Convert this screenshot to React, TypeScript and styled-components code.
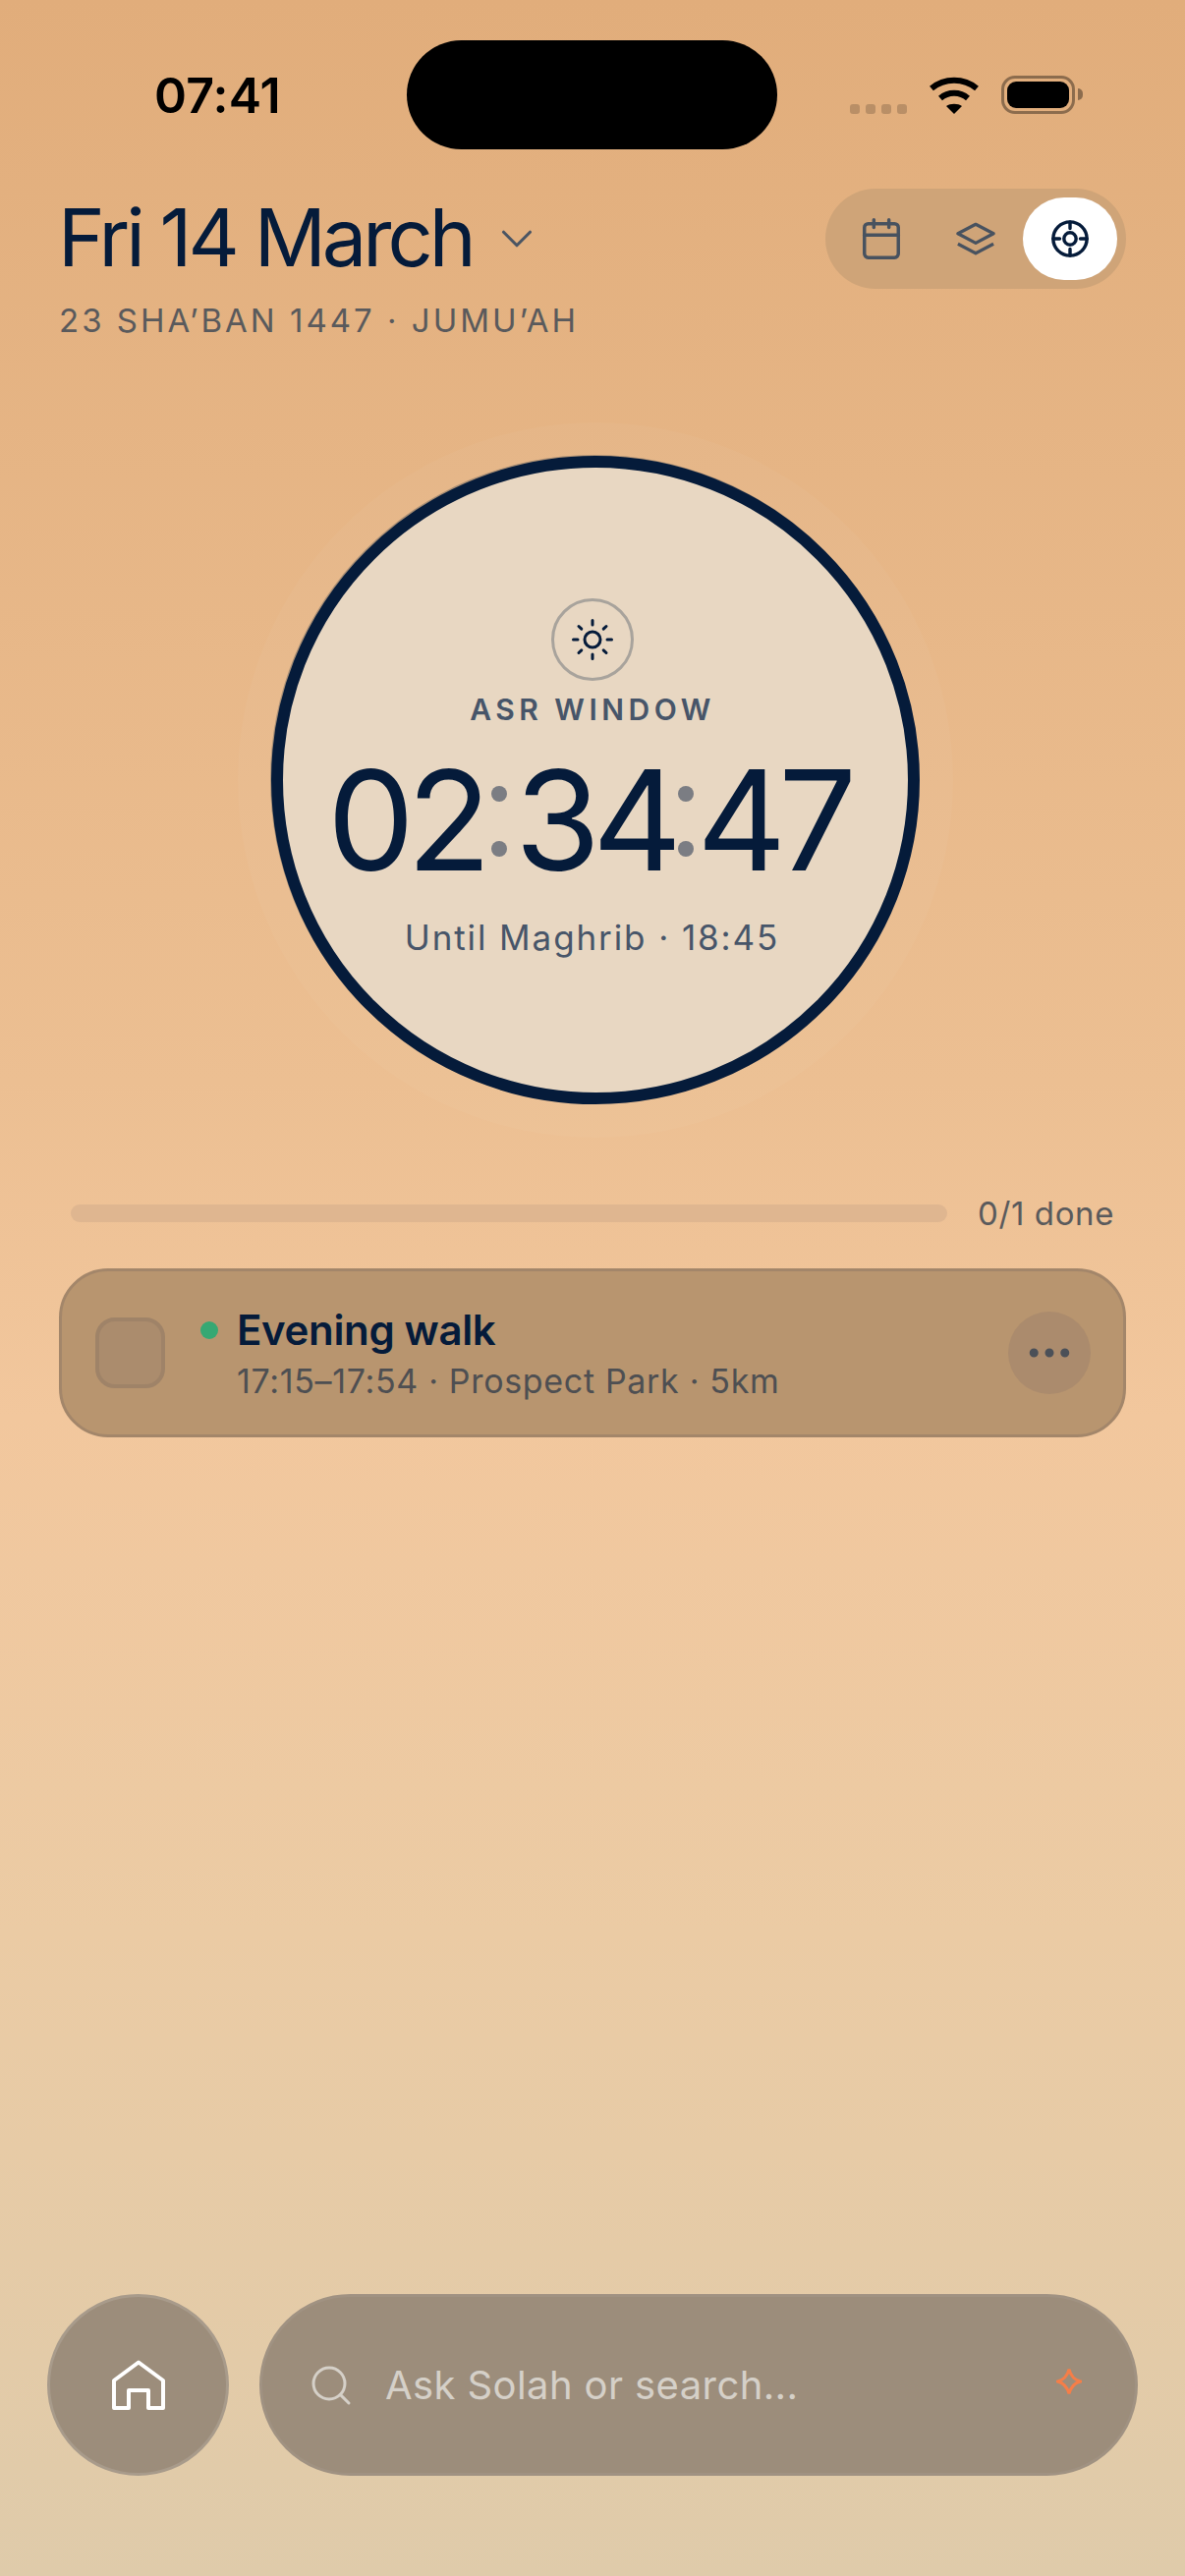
import React from "react";
import styled, { createGlobalStyle } from "styled-components";
import { ChevronDown, Ellipsis, Search, Calendar } from "lucide-react";

const GlobalStyle = createGlobalStyle`
  html, body {
    margin: 0;
    padding: 0;
  }
  body {
    font-family: "Inter", "Liberation Sans", sans-serif;
  }
  * {
    box-sizing: border-box;
  }
`;

const Screen = styled.div`
  width: 1206px;
  height: 2622px;
  display: flex;
  flex-direction: column;
  overflow: hidden;
  background: linear-gradient(180deg, #e1ad7b 0%, #ecbf92 42%, #f2c79d 55%, #ebcba4 75%, #dfcbaa 100%);
`;

const StatusBar = styled.div`
  display: grid;
  grid-template-columns: 414px 377px 1fr;
  align-items: center;
  height: 152px;
  padding-top: 41px;
`;

const Clock = styled.span`
  margin-left: 157px;
  font-size: 50px;
  font-weight: 600;
  letter-spacing: 0.2px;
  color: #000;
`;

const Island = styled.div`
  height: 111px;
  border-radius: 56px;
  background: #000;
`;

const StatusIcons = styled.div`
  display: flex;
  align-items: center;
  padding-left: 74px;
`;

const SignalDots = styled.div`
  display: flex;
  gap: 6px;
  margin: 28px 22px 0 0;
`;

const SignalDot = styled.span`
  width: 10px;
  height: 10px;
  border-radius: 3px;
  background: rgba(0, 0, 0, 0.18);
`;

const Battery = styled.div`
  width: 75px;
  height: 39px;
  margin-left: 22px;
  padding: 3px;
  position: relative;
  border: 3px solid rgba(0, 0, 0, 0.38);
  border-radius: 14px;
  &::after {
    content: "";
    position: absolute;
    right: -11px;
    top: 10px;
    width: 5px;
    height: 12px;
    border-radius: 0 6px 6px 0;
    background: rgba(0, 0, 0, 0.38);
  }
`;

const BatteryFill = styled.div`
  height: 100%;
  border-radius: 9px;
  background: #000;
`;

const Header = styled.header`
  display: flex;
  justify-content: space-between;
  align-items: flex-start;
  margin-top: 40px;
  padding: 0 60px;
`;

const DateBlock = styled.div`
  padding-top: 10px;
`;

const DateRow = styled.div`
  display: flex;
  align-items: center;
  color: #4b5563;
  svg {
    margin-left: 18px;
  }
`;

const DateTitle = styled.h1`
  margin: 0 0 0 -1px;
  font-size: 81px;
  line-height: 81px;
  font-weight: 400;
  letter-spacing: -4px;
  color: #051b3a;
`;

const HijriDate = styled.div`
  margin-top: 23px;
  font-size: 33px;
  line-height: 40px;
  letter-spacing: 3px;
  color: #5a5a5c;
`;

const ViewSwitch = styled.div`
  display: flex;
  padding: 9px;
  border-radius: 51px;
  background: #cfa478;
`;

const ViewButton = styled.div<{ $active?: boolean }>`
  width: 96px;
  height: 84px;
  display: flex;
  align-items: center;
  justify-content: center;
  border-radius: 42px;
  color: ${(p) => (p.$active ? "#051b3a" : "#48525f")};
  background: ${(p) => (p.$active ? "#fff" : "transparent")};
`;

const ClockSection = styled.section`
  display: flex;
  justify-content: center;
  margin: 118px 0 0 5px;
`;

const Dial = styled.div`
  width: 660px;
  height: 660px;
  padding-top: 133px;
  display: flex;
  flex-direction: column;
  align-items: center;
  border: 12px solid #051b3a;
  border-radius: 50%;
  background: #e8d7c2;
  box-shadow: -1px -1px 0 rgba(90, 90, 90, 0.45), 0 0 0 34px rgba(255, 255, 255, 0.035);
`;

const SunBadge = styled.div`
  width: 84px;
  height: 84px;
  margin-left: -5px;
  display: flex;
  align-items: center;
  justify-content: center;
  border: 3px solid #a8a39c;
  border-radius: 50%;
  color: #051b3a;
`;

const WindowLabel = styled.div`
  margin: 11px 0 0 -5px;
  font-size: 30px;
  line-height: 36px;
  font-weight: 600;
  letter-spacing: 4.5px;
  color: #475569;
`;

const Countdown = styled.div`
  display: flex;
  margin: 24px 0 0 -14px;
  font-size: 141px;
  line-height: 142px;
  font-weight: 400;
  letter-spacing: -8px;
  color: #051b3a;
`;

const Colon = styled.span<{ $width: number }>`
  width: ${(p) => p.$width}px;
  height: 72px;
  margin-top: 36px;
  display: flex;
  flex-direction: column;
  justify-content: space-between;
  align-items: center;
  &::before,
  &::after {
    content: "";
    flex: none;
    width: 16px;
    height: 16px;
    border-radius: 50%;
    background: #7b7d83;
  }
`;

const UntilLabel = styled.div`
  margin: 28px 0 0 -6px;
  font-size: 35px;
  line-height: 40px;
  letter-spacing: 1.9px;
  color: #475569;
`;

const Progress = styled.div`
  display: flex;
  align-items: center;
  gap: 31px;
  height: 40px;
  margin: 91px 72px 0 72px;
`;

const ProgressTrack = styled.div`
  flex: 1;
  height: 18px;
  border-radius: 9px;
  background: #dfb690;
`;

const ProgressText = styled.span`
  font-size: 33px;
  letter-spacing: 0.6px;
  color: #5a5a5c;
`;

const TaskCard = styled.div`
  display: flex;
  align-items: center;
  height: 172px;
  margin: 36px 60px 0;
  padding: 0 33px 0 34px;
  border: 3px solid #a3866a;
  border-radius: 50px;
  background: #b8956f;
`;

const Checkbox = styled.div`
  width: 71px;
  height: 72px;
  border: 4px solid #9f8368;
  border-radius: 20px;
  background: #ab8c6d;
`;

const TaskBody = styled.div`
  flex: 1;
  margin-left: 36px;
`;

const TaskTitleRow = styled.div`
  display: flex;
  align-items: center;
  gap: 19px;
`;

const StatusDot = styled.span`
  width: 18px;
  height: 18px;
  border-radius: 50%;
  background: #36a873;
`;

const TaskTitle = styled.div`
  font-size: 42px;
  line-height: 50px;
  font-weight: 600;
  letter-spacing: -0.35px;
  color: #051b3a;
`;

const TaskMeta = styled.div`
  margin: 7px 0 0 37px;
  font-size: 34px;
  line-height: 40px;
  letter-spacing: 0.67px;
  color: #4e4f52;
`;

const MoreButton = styled.div`
  width: 84px;
  height: 84px;
  display: flex;
  align-items: center;
  justify-content: center;
  border-radius: 50%;
  color: #4b5058;
  background: #ab8b6d;
`;

const BottomBar = styled.div`
  display: flex;
  gap: 31px;
  margin-top: auto;
  padding: 0 48px 102px;
`;

const HomeButton = styled.div`
  width: 185px;
  height: 185px;
  flex: none;
  display: flex;
  align-items: center;
  justify-content: center;
  border: 3px solid #a89b8b;
  border-radius: 50%;
  color: #fff;
  background: #9c8d7b;
`;

const SearchBar = styled.div`
  flex: 1;
  height: 185px;
  display: flex;
  align-items: center;
  padding: 0 54px 0 46px;
  border: 3px solid #a09282;
  border-radius: 93px;
  color: #d5d0c8;
  background: #9c8d7b;
`;

const SearchText = styled.span`
  flex: 1;
  margin-left: 31px;
  font-size: 40px;
  letter-spacing: 0.4px;
`;

const Sparkle = styled.svg`
  margin-bottom: 8px;
`;

const WifiIcon = () => (
  <svg width="52" height="38" viewBox="0 0 52 38" fill="none" stroke="#000" strokeWidth="6">
    <path d="M3 12C16 1 36 1 49 12" />
    <path d="M12 22C20 15 32 15 40 22" />
    <path d="M18 30C22 27 30 27 34 30L26 38Z" fill="#000" stroke="none" />
  </svg>
);

const LayersIcon = () => (
  <svg width="40" height="35" viewBox="0 0 42 36" fill="none" stroke="currentColor" strokeWidth="3.4" strokeLinejoin="round">
    <path d="M21 2L40 12L21 22L2 12Z" />
    <path d="M2 23L21 33L40 23" />
  </svg>
);

const TargetIcon = () => (
  <svg width="40" height="40" viewBox="0 0 42 42" fill="none" stroke="currentColor" strokeWidth="3.6" strokeLinecap="round">
    <circle cx="21" cy="21" r="18" />
    <circle cx="21" cy="21" r="6.5" />
    <path d="M21 3V10M21 32V39M3 21H10M32 21H39" />
  </svg>
);

const SunIcon = () => (
  <svg width="44" height="44" viewBox="0 0 44 44" fill="none" stroke="currentColor" strokeWidth="3" strokeLinecap="round">
    <circle cx="22" cy="22" r="8" />
    <path d="M22 2.5V7M22 37V41.5M2.5 22H7M37 22H41.5M8 8.5L10.8 11.2M33.2 32.8L36 35.5M8 35.5L10.8 32.8M33.2 11.2L36 8.5" />
  </svg>
);

const HomeIcon = () => (
  <svg width="54" height="51" viewBox="0 0 54 51" fill="none" stroke="currentColor" strokeWidth="4" strokeLinejoin="round">
    <path d="M27 2.5L52 21V49H37V31H17V49H2V21Z" />
  </svg>
);

export default function App() {
  return (
    <>
      <GlobalStyle />
      <Screen>
        <StatusBar>
          <Clock>07:41</Clock>
          <Island />
          <StatusIcons>
            <SignalDots>
              <SignalDot />
              <SignalDot />
              <SignalDot />
              <SignalDot />
            </SignalDots>
            <WifiIcon />
            <Battery>
              <BatteryFill />
            </Battery>
          </StatusIcons>
        </StatusBar>

        <Header>
          <DateBlock>
            <DateRow>
              <DateTitle>Fri 14 March</DateTitle>
              <ChevronDown size={54} strokeWidth={1.4} />
            </DateRow>
            <HijriDate>23 SHA’BAN 1447 · JUMU’AH</HijriDate>
          </DateBlock>
          <ViewSwitch>
            <ViewButton>
              <Calendar size={46} strokeWidth={1.8} />
            </ViewButton>
            <ViewButton>
              <LayersIcon />
            </ViewButton>
            <ViewButton $active>
              <TargetIcon />
            </ViewButton>
          </ViewSwitch>
        </Header>

        <ClockSection>
          <Dial>
            <SunBadge>
              <SunIcon />
            </SunBadge>
            <WindowLabel>ASR WINDOW</WindowLabel>
            <Countdown>
              <span>02</span>
              <Colon $width={32} />
              <span>34</span>
              <Colon $width={23} />
              <span>47</span>
            </Countdown>
            <UntilLabel>Until Maghrib · 18:45</UntilLabel>
          </Dial>
        </ClockSection>

        <Progress>
          <ProgressTrack />
          <ProgressText>0/1 done</ProgressText>
        </Progress>

        <TaskCard>
          <Checkbox />
          <TaskBody>
            <TaskTitleRow>
              <StatusDot />
              <TaskTitle>Evening walk</TaskTitle>
            </TaskTitleRow>
            <TaskMeta>17:15–17:54 · Prospect Park · 5km</TaskMeta>
          </TaskBody>
          <MoreButton>
            <Ellipsis size={54} strokeWidth={2} />
          </MoreButton>
        </TaskCard>

        <BottomBar>
          <HomeButton>
            <HomeIcon />
          </HomeButton>
          <SearchBar>
            <Search size={48} strokeWidth={1.5} />
            <SearchText>Ask Solah or search...</SearchText>
            <Sparkle width="26" height="28" viewBox="0 0 26 28" fill="none" stroke="#f57e48" strokeWidth="3">
              <path d="M13 1.5Q15.5 11.5 24.5 14Q15.5 16.5 13 26.5Q10.5 16.5 1.5 14Q10.5 11.5 13 1.5Z" />
            </Sparkle>
          </SearchBar>
        </BottomBar>
      </Screen>
    </>
  );
}
